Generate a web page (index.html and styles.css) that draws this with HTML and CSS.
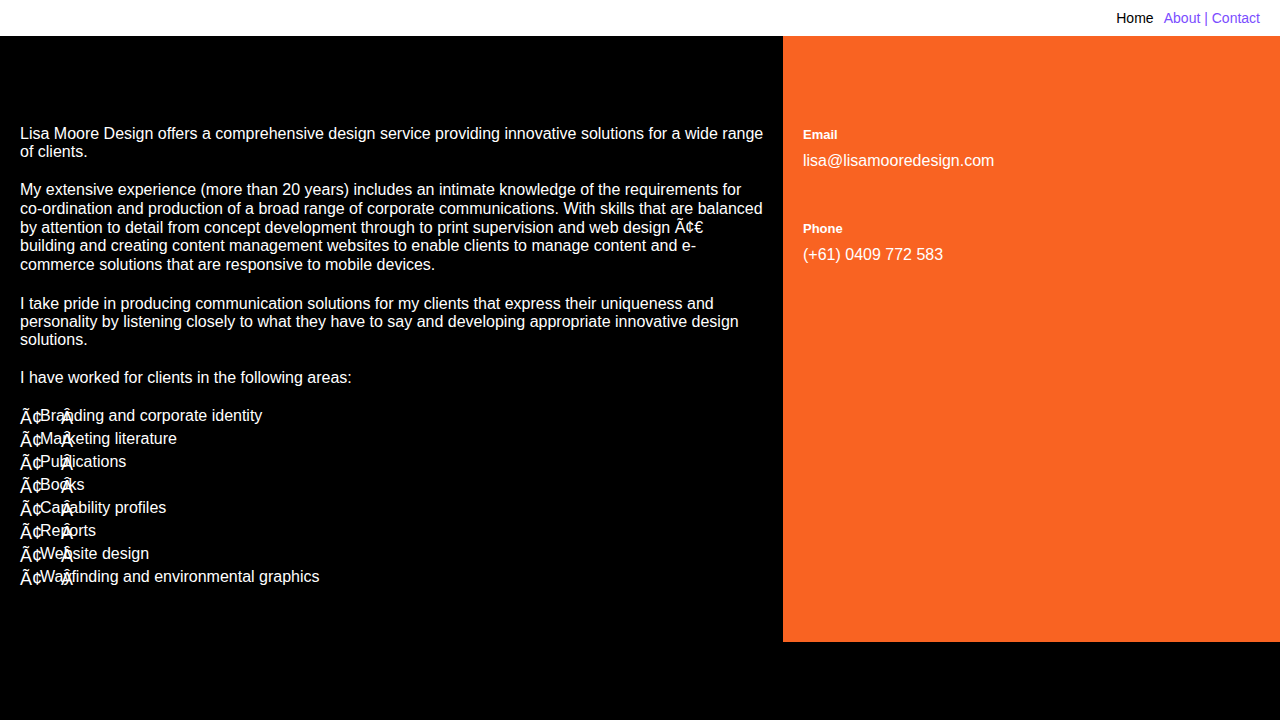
FILE: index.html
```html
<!DOCTYPE html>
<html lang="en">
<head>
<meta charset="utf-8">
<title>About | Lisa Moore Design</title>
<link rel="stylesheet" href="styles.css">
</head>
<body>
<header class="topbar">
  <nav class="nav">
    <a class="nav-home" href="#">Home</a>
    <span class="nav-links"><a href="#">About</a> | <a href="#">Contact</a></span>
  </nav>
</header>
<main class="page">
  <section class="content">
    <p>Lisa Moore Design offers a comprehensive design service providing innovative solutions for a wide range of clients.</p>
    <p class="tall">My extensive experience (more than 20 years) includes an intimate knowledge of the requirements for co-ordination and production of a broad range of corporate communications. With skills that are balanced by attention to detail from concept development through to print supervision and web design Ã¢€<br>building and creating content management websites to enable clients to manage content and e-commerce solutions that are responsive to mobile devices.</p>
    <p>I take pride in producing communication solutions for my clients that express their uniqueness and personality by listening closely to what they have to say and developing appropriate innovative design solutions.</p>
    <p class="lead-in">I have worked for clients in the following areas:</p>
    <ul class="areas">
      <li>Branding and corporate identity</li>
      <li>Marketing literature</li>
      <li>Publications</li>
      <li>Books</li>
      <li>Capability profiles</li>
      <li>Reports</li>
      <li>Website design</li>
      <li>Wayfinding and environmental graphics</li>
    </ul>
  </section>
  <aside class="sidebar">
    <div class="contact-block">
      <div class="contact-label">Email</div>
      <div class="contact-value">lisa@lisamooredesign.com</div>
    </div>
    <div class="contact-block">
      <div class="contact-label">Phone</div>
      <div class="contact-value">(+61) 0409 772 583</div>
    </div>
  </aside>
</main>
</body>
</html>
```
FILE: styles.css
```css
html, body {
  margin: 0;
  padding: 0;
}
body {
  background: #000;
  color: #fff;
  font-family: "Liberation Sans", Arial, Helvetica, sans-serif;
  font-size: 16px;
}
.topbar {
  background: #fff;
  height: 36px;
  display: flex;
  justify-content: flex-end;
  align-items: center;
  padding-right: 20px;
}
.nav {
  font-size: 14px;
  line-height: 16px;
}
.nav a {
  text-decoration: none;
}
.nav-home {
  color: #000;
  margin-right: 7px;
}
.nav-links,
.nav-links a {
  color: #7b4dff;
}
.page {
  display: flex;
  height: 606px;
}
.content {
  width: 783px;
  box-sizing: border-box;
  padding: 89px 16px 0 20px;
  background: #000;
}
.content p {
  margin: 0 0 20px;
  line-height: 18px;
}
.content p.tall {
  line-height: 18.8px;
}
.content p.lead-in {
  margin-bottom: 17px;
}
.areas {
  list-style: none;
  margin: 0;
  padding: 0 0 0 20px;
}
.areas li {
  position: relative;
  line-height: 23px;
}
.areas li::before {
  content: "Ã¢";
  position: absolute;
  left: -20px;
  top: 3px;
  font-size: 18px;
}
.areas li::after {
  content: "Â";
  position: absolute;
  left: 21px;
  top: 3px;
  font-size: 18px;
}
.sidebar {
  flex: 1;
  background: #f96322;
  padding: 91px 20px 0;
}
.contact-block {
  margin-bottom: 50px;
}
.contact-label {
  font-size: 13px;
  font-weight: bold;
  line-height: 16px;
  margin-bottom: 8px;
}
.contact-value {
  font-size: 16px;
  line-height: 20px;
}
```
